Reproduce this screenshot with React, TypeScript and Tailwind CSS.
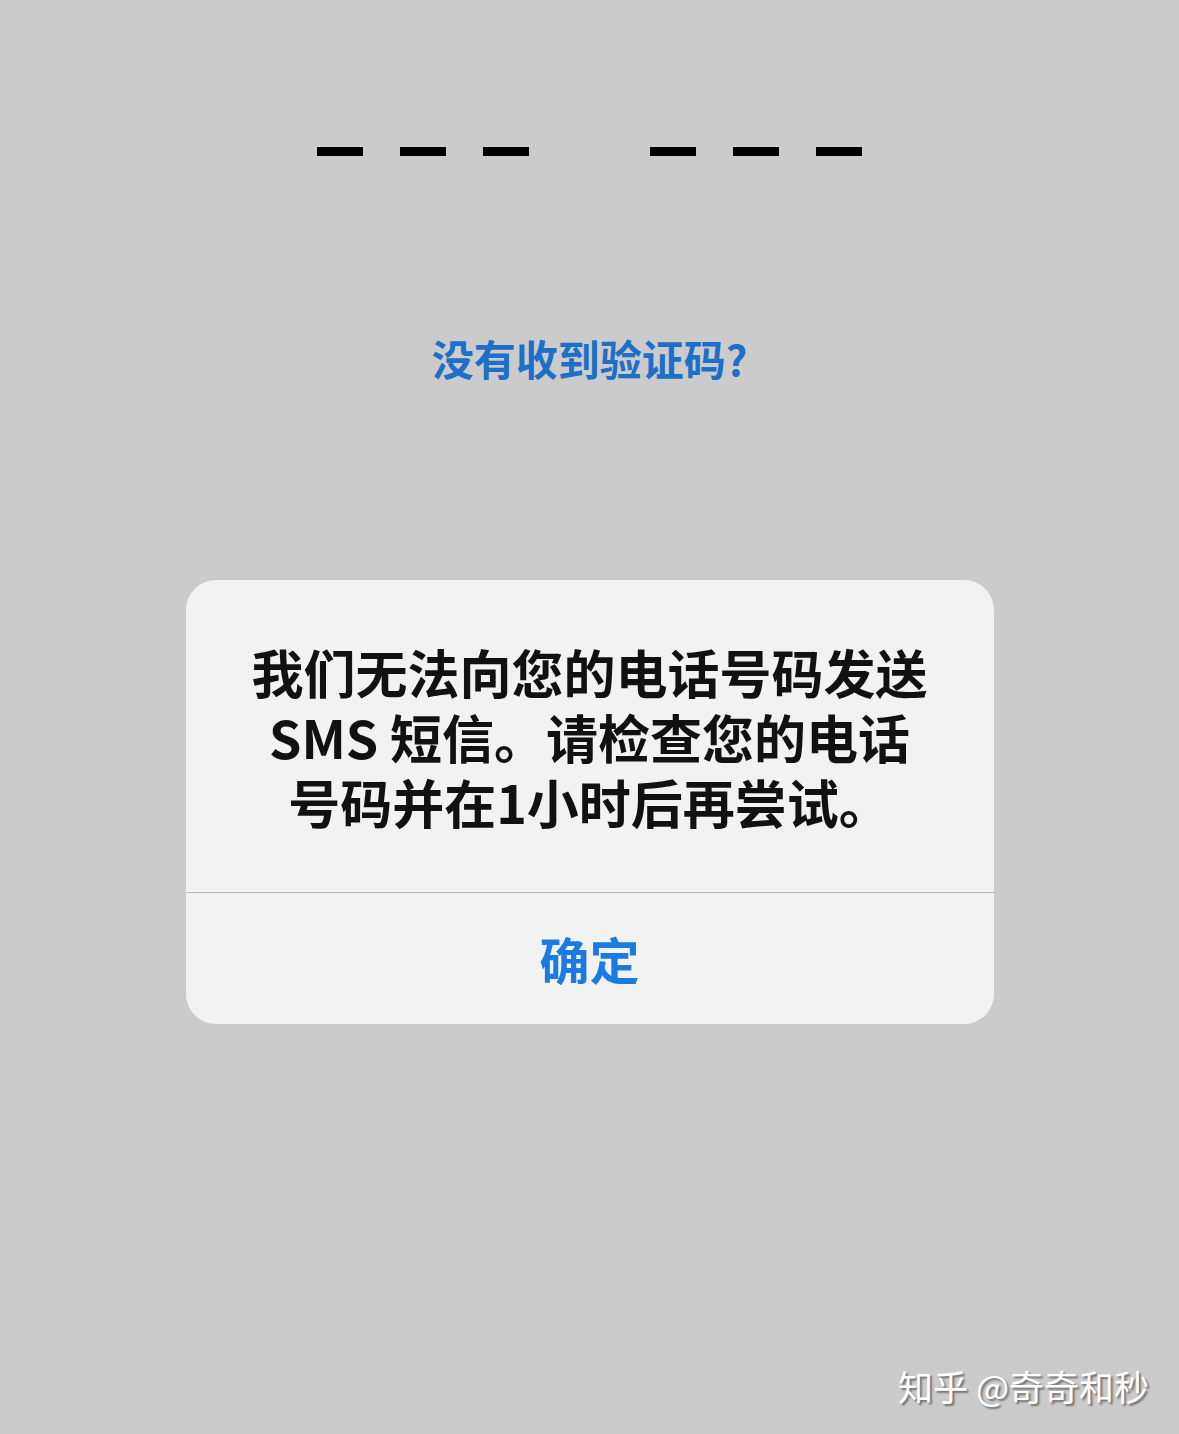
import React from 'react'

const FONT = { fontFamily: '"Noto Sans CJK SC", "Noto Sans", sans-serif' }

function Dashes() {
  return (
    <div className="flex justify-center pt-[147px] gap-[121px]">
      {[0, 1].map((g) => (
        <div key={g} className="flex gap-[37px]">
          {[0, 1, 2].map((i) => (
            <div key={i} className="h-[9px] w-[46px] bg-black" />
          ))}
        </div>
      ))}
    </div>
  )
}

export default function App() {
  return (
    <div className="relative min-h-[1434px] w-full bg-[#cbcbcb] flex flex-col items-center" style={FONT}>
      <Dashes />

      <div className="mt-[179px] text-[42px] leading-[46px] font-bold text-[#1e6fc8]">没有收到验证码?</div>

      <div className="mt-[199px] w-[808px] rounded-[30px] bg-[#f2f2f2] overflow-hidden">
        <div className="h-[312px] flex flex-col items-center justify-center text-center text-[52px] leading-[65px] font-bold text-[#111]">
          <p>我们无法向您的电话号码发送</p>
          <p>SMS 短信。请检查您的电话</p>
          <p>号码并在1小时后再尝试。</p>
        </div>
        <div className="h-px bg-[#b9b9b9]" />
        <div className="h-[131px] flex items-center justify-center">
          <span className="text-[50px] font-bold text-[#1a7be0]">确定</span>
        </div>
      </div>

      <div
        className="absolute right-[30px] top-[1360px] text-[35px] text-white"
        style={{ textShadow: '2px 2px 2px rgba(0,0,0,0.45)' }}
      >
        知乎 @奇奇和秒
      </div>
    </div>
  )
}
